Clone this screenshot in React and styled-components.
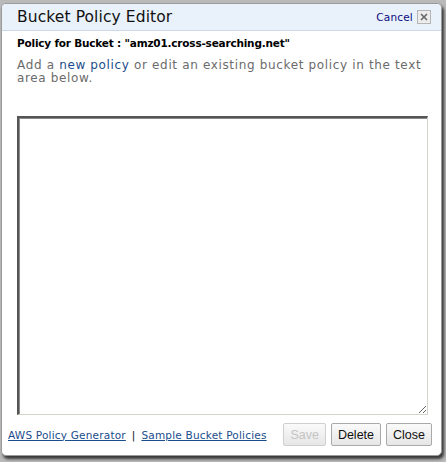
import styled, { createGlobalStyle } from "styled-components";

const Global = createGlobalStyle`
    html, body {
        margin : 0;
        padding : 0;
        background : #b9b9b9;
    }
    body {
        width : 446px;
        height : 462px;
        overflow : hidden;
    }
`

const Dialog = styled.div`
    margin : 3px 0 0 1px;
    width : 439px;
    height : 451px;
    background : #fff;
    border : 1px solid #9a9a9a;
    border-radius : 5px;
    box-shadow : 2px 3px 3px rgba(0, 0, 0, 0.7);
    display : flex;
    flex-direction : column;
    font-family : "DejaVu Sans", Verdana, sans-serif;
    overflow : hidden;
`

const Header = styled.div`
    height : 26px;
    padding : 0 10px 0 15px;
    background : #e9f1fb;
    border-bottom : 1px solid #cad8ea;
    display : flex;
    align-items : center;
    justify-content : space-between;
`

const Title = styled.div`
    font-size : 15.5px;
    color : #111;
    letter-spacing : 0.1px;
`

const CancelWrap = styled.div`
    display : flex;
    align-items : center;
    gap : 4px;
`

const CancelLink = styled.a`
    font-size : 10.5px;
    color : #0b0b80;
    letter-spacing : 0.2px;
    text-decoration : none;
    cursor : pointer;
`

const CloseBox = styled.span`
    width : 12px;
    height : 12px;
    border : 1px solid #b5b5b5;
    background : #ececec;
    display : flex;
    align-items : center;
    justify-content : center;
`

const Body = styled.div`
    flex : 1;
    display : flex;
    flex-direction : column;
    padding : 0 14px 0 15px;
`

const BucketLine = styled.div`
    margin-top : 6px;
    font-size : 10.5px;
    font-weight : 700;
    color : #000;
    letter-spacing : -0.2px;
`

const Hint = styled.p`
    margin : 10px 0 0;
    font-size : 12px;
    line-height : 13px;
    color : #6b6b6b;
    letter-spacing : 0.65px;

    a {
        color : #1a4d8c;
        text-decoration : none;
    }
`

const PolicyArea = styled.textarea`
    margin-top : 31px;
    width : 411px;
    height : 299px;
    box-sizing : border-box;
    border-style : solid;
    border-width : 2px 1px 1px 2px;
    border-color : #555 #d6d3cc #d6d3cc #555;
    box-shadow : inset 1px 1px 0 #8a8a8a;
    resize : both;
    outline : none;
    font-family : "Liberation Mono", monospace;
    font-size : 12px;
`

const Footer = styled.div`
    display : flex;
    align-items : center;
    justify-content : space-between;
    padding : 8px 9px 0 6px;
    margin : 0 -14px 0 -15px;
`

const Links = styled.div`
    font-size : 10.5px;
    color : #111;
    display : flex;
    gap : 6px;

    a {
        color : #1a4d8c;
        letter-spacing : 0.2px;
        text-decoration : underline;
        cursor : pointer;
    }
`

const Buttons = styled.div`
    display : flex;
    gap : 5px;
`

const Button = styled.button`
    height : 23px;
    padding : 0 6px;
    font-family : "Liberation Sans", Arial, sans-serif;
    font-size : 12.5px;
    color : ${p => p.disabled ? "#c4c4c4" : "#111"};
    background : linear-gradient(#fafafa, #e6e6e6);
    border : 1px solid ${p => p.disabled ? "#cfcfcf" : "#a9a9a9"};
    border-radius : 2px;
    cursor : ${p => p.disabled ? "default" : "pointer"};
`

const App = () => {
    return (
        <>
            <Global />
            <Dialog>
                <Header>
                    <Title>Bucket Policy Editor</Title>
                    <CancelWrap>
                        <CancelLink>Cancel</CancelLink>
                        <CloseBox>
                            <svg width="8" height="8" viewBox="0 0 8 8">
                                <path d="M1 1 L7 7 M7 1 L1 7" stroke="#666" strokeWidth="1.6" />
                            </svg>
                        </CloseBox>
                    </CancelWrap>
                </Header>
                <Body>
                    <BucketLine>Policy for Bucket : "amz01.cross-searching.net"</BucketLine>
                    <Hint>
                        Add a <a href="#">new policy</a> or edit an existing bucket policy in the text area below.
                    </Hint>
                    <PolicyArea />
                    <Footer>
                        <Links>
                            <a>AWS Policy Generator</a>
                            <span>|</span>
                            <a>Sample Bucket Policies</a>
                        </Links>
                        <Buttons>
                            <Button disabled>Save</Button>
                            <Button>Delete</Button>
                            <Button>Close</Button>
                        </Buttons>
                    </Footer>
                </Body>
            </Dialog>
        </>
    )
}

export default App;
